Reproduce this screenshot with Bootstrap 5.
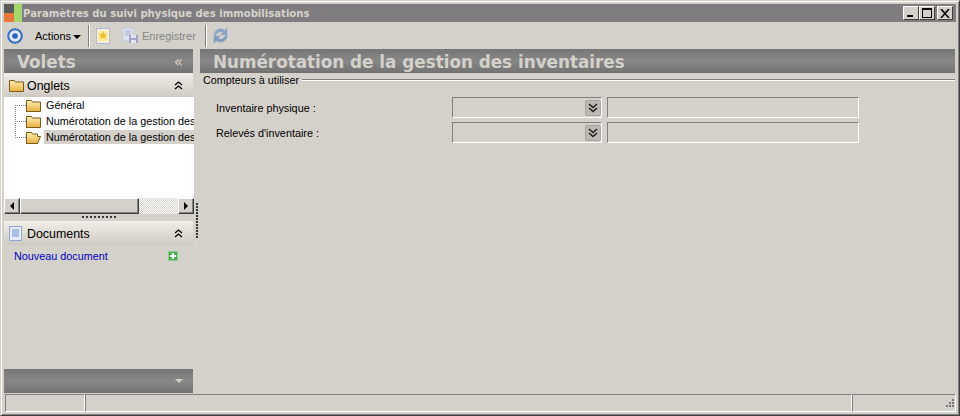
<!DOCTYPE html>
<html lang="fr">

<head>
    <meta charset="UTF-8">
    <title>Paramètres du suivi physique des immobilisations</title>
    <link href="https://cdn.jsdelivr.net/npm/bootstrap@5.3.0/dist/css/bootstrap.min.css" rel="stylesheet">
    <style>
        html, body { height: 100%; }
        body { background: #d4d1cb; font-family: "Liberation Sans", Arial, sans-serif; font-size: 10.8px; color: #000; overflow: hidden; }
        svg { flex: none; }
        .win-frame { width: 960px; height: 416px; background: #d4d1cb; border-style: solid; border-width: 1px; border-color: #d4d1cb #404040 #404040 #d4d1cb; box-shadow: inset 1px 1px 0 #fff, inset -1px -1px 0 #808080; padding: 3px; }
        .title-bar { height: 18px; background: #7f7d7f; padding-right: 3px; }
        .title-logo { width: 18px; height: 18px; flex: none; margin-right: 1px; background: linear-gradient(#5a5a5a, #5a5a5a) left top / 10px 9px no-repeat, linear-gradient(#e8773a, #e8773a) left bottom / 10px 9px no-repeat, #a6d66e; }
        .title-text { font-family: "DejaVu Sans", sans-serif; font-weight: 700; font-size: 10.1px; color: #d6d3cc; padding-top: 2px; }
        .win-btn { width: 16px; height: 14px; background: #d4d1cb; border: 1px solid; border-color: #fff #404040 #404040 #fff; display: flex; align-items: center; justify-content: center; padding: 0; }
        .close-btn { margin-left: 2px; }
        .tool-bar { height: 27px; padding-left: 3px; font-size: 11px; }
        .tool-sep { width: 2px; height: 22px; border-left: 1px solid #808080; border-right: 1px solid #fff; flex: none; }
        .actions-label { margin-left: 12px; width: 53px; padding-top: 2px; }
        .caret-down { width: 0; height: 0; border: 4px solid transparent; border-top-color: #000; border-bottom: 0; margin-left: 2px; display: inline-block; vertical-align: 1px; }
        .new-icon { margin-left: 6px; }
        .save-icon { margin-left: 12px; }
        .save-label { color: #858585; margin-left: 3px; margin-right: 9px; padding-top: 2px; }
        .sync-icon { margin-left: 5px; }
        .work-area { height: 344px; }
        .side-panel { width: 189px; flex: none; }
        .main-panel { margin-left: 7px; width: 755px; flex: none; }
        .gray-head { height: 24px; background: linear-gradient(#777 0, #878787 50%, #727272 100%); color: #d4d1cb; font-family: "DejaVu Sans", sans-serif; font-weight: 700; font-size: 16.8px; line-height: 26px; }
        .side-head { padding-left: 13px; padding-right: 10px; }
        .side-head .fold-mark { font-size: 15px; font-weight: 400; }
        .main-head { padding-left: 13px; }
        .pane-head { height: 24px; background: linear-gradient(#f1efe9, #cfcbc3); padding-left: 5px; padding-right: 10px; font-size: 12.4px; }
        .pane-head span { padding-top: 2px; }
        .pane-onglets span { margin-left: 3px; }
        .pane-docs span { margin-left: 5px; }
        .tree-box { width: 190px; height: 101px; background: #fff; position: relative; overflow: hidden; }
        .tree-row { height: 16px; white-space: nowrap; padding-left: 22px; }
        .tree-row span { padding: 0 1px; margin-left: 4px; height: 14px; line-height: 14px; }
        .tree-row.is-open span { background: #d4d1cb; flex: 1; margin-left: 3px; padding-left: 2px; }
        .tree-line { position: absolute; left: 11px; top: 8px; width: 11px; height: 33px; border-left: 1px dotted #808080; border-bottom: 1px dotted #808080; }
        .tree-tick { position: absolute; left: 11px; width: 11px; border-top: 1px dotted #808080; }
        .tick-one { top: 8px; }
        .tick-two { top: 24px; }
        .scroll-bar { width: 190px; height: 16px; background: repeating-conic-gradient(#d4d1cb 0 25%, #fff 0 50%) 0 0 / 2px 2px; }
        .scroll-btn, .scroll-thumb { background: #d4d1cb; border: 1px solid; border-color: #fff #404040 #404040 #fff; box-shadow: inset -1px -1px 0 #808080; height: 16px; }
        .scroll-btn { width: 16px; display: flex; align-items: center; justify-content: center; flex: none; }
        .scroll-thumb { width: 119px; flex: none; }
        .arrow-left { border: 4px solid transparent; border-right-color: #000; border-left: 0; }
        .arrow-right { border: 4px solid transparent; border-left-color: #000; border-right: 0; }
        .grip-h { width: 34px; height: 2px; margin: 2px auto 3px 78px; flex: none; background: repeating-linear-gradient(90deg, #333 0 2px, transparent 2px 4px); }
        .grip-v { width: 2px; height: 36px; position: absolute; left: 192px; top: 154px; background: repeating-linear-gradient(#333 0 2px, transparent 2px 3px); }
        .doc-link { color: #0000c0; text-decoration: none; padding: 0 15px 0 10px; height: 22px; }
        .side-foot { height: 24px; background: linear-gradient(#777, #888 50%, #727272); padding-right: 10px; margin-top: auto; }
        .foot-arrow { border: 4px solid transparent; border-top-color: #d4d1cb; border-bottom: 0; }
        .group-title { height: 14px; line-height: 13px; padding-left: 3px; margin-bottom: 10px; }
        .group-rule { flex: 1; height: 2px; border-top: 1px solid #808080; border-bottom: 1px solid #fff; margin-left: 3px; }
        .field-row { margin-left: 16px; height: 21px; margin-bottom: 4px; }
        .field-label { width: 236px; flex: none; padding-top: 2px; }
        .sunken { height: 21px; background: #d4d1cb; border: 1px solid; border-color: #808080 #fff #fff #808080; }
        .sel-box { width: 150px; }
        .input-box { width: 252px; margin-left: 5px; }
        .sel-btn { width: 16px; height: 16px; background: #bdb9b2; border: 1px solid #a9a59e; border-radius: 2px; display: flex; align-items: center; justify-content: center; }
        .status-bar { height: 18px; margin-top: 1px; }
        .status-cell { height: 18px; border: 1px solid; border-color: #808080 #fff #fff #808080; }
        .cell-a { width: 80px; margin-left: 1px; }
        .cell-b { width: 767px; }
        .cell-c { flex: 1; position: relative; }
        .size-grip { position: absolute; right: 0; bottom: 0; }
    </style>
</head>

<body>
    <svg width="0" height="0" class="position-absolute">
        <defs>
            <linearGradient id="folderFill" x1="0" y1="0" x2="0" y2="1">
                <stop offset="0" stop-color="#fdeeb0"/>
                <stop offset="1" stop-color="#e8b13f"/>
            </linearGradient>
        </defs>
    </svg>
    <div class="win-frame">
        <!-- Title bar -->
        <div class="title-bar d-flex align-items-center">
            <div class="title-logo"></div>
            <div class="title-text flex-grow-1">Paramètres du suivi physique des immobilisations</div>
            <button class="win-btn"><svg width="10" height="10"><rect x="1" y="7" width="6" height="2" fill="#000"/></svg></button>
            <button class="win-btn"><svg width="12" height="10"><rect x="1.5" y=".5" width="9" height="9" fill="none" stroke="#000"/><rect x="1" y="0" width="10" height="2" fill="#000"/></svg></button>
            <button class="win-btn close-btn"><svg width="10" height="9"><path d="M1 0l8 9M9 0L1 9" stroke="#000" stroke-width="1.6"/></svg></button>
        </div>

        <!-- Toolbar -->
        <div class="tool-bar d-flex align-items-center">
            <svg width="16" height="16" viewBox="0 0 16 16"><circle cx="8" cy="8" r="6.800" fill="#dfe6f5" stroke="#3a6ec4" stroke-width="2"/><circle cx="8" cy="8" r="2.800" fill="#2b5fc0"/></svg>
            <div class="actions-label">Actions<i class="caret-down"></i></div>
            <div class="tool-sep"></div>
            <svg class="new-icon" width="14" height="16" viewBox="0 0 14 16"><rect x=".5" y=".5" width="13" height="15" fill="#f6f1d8" stroke="#aebbd6"/><rect x="2" y="3" width="10" height="10" fill="#fbe9a0"/><path d="M7 3.500l1.200 2.600 2.800.3-2 1.900.6 2.800L7 9.700l-2.600 1.400.6-2.800-2-1.900 2.800-.3z" fill="#efbd2a"/></svg>
            <svg class="save-icon" width="17" height="17" viewBox="0 0 17 17"><rect x="1" y="1" width="10" height="13" fill="#dfe3ee" stroke="#c5cbdc"/><path d="M3 4h6M3 6h6M3 8h6" stroke="#a8b0c8"/><rect x="7" y="8" width="9" height="8" fill="#a5a3c8"/><rect x="9" y="8" width="5" height="3" fill="#e4e4f0"/><rect x="9" y="13" width="5" height="3" fill="#e4e4f0"/></svg>
            <div class="save-label">Enregistrer</div>
            <div class="tool-sep"></div>
            <svg class="sync-icon" width="17" height="19" viewBox="0 0 19 20"><path d="M2 10c0-6 7-10 12-6l3-3v8.500h-7.500l2.500-2.500c-3-2-7-.5-7.500 3z" fill="#8aa3c8" stroke="#a9b6c8" stroke-width=".5"/><path d="M17 10c0 6-7 10-12 6l-3 3v-8.500h7.500l-2.500 2.500c3 2 7 .5 7.500-3z" fill="#7f99c0" stroke="#a9b6c8" stroke-width=".5"/></svg>
        </div>

        <div class="work-area d-flex position-relative">
            <!-- Left pane -->
            <div class="side-panel d-flex flex-column">
                <div class="gray-head side-head d-flex justify-content-between">
                    <span>Volets</span><span class="fold-mark">«</span>
                </div>
                <div class="pane-head pane-onglets d-flex align-items-center">
                    <svg width="15" height="13" viewBox="0 0 15 13"><path d="M.5 1.500h5l1 1.500h8v9.500H.5z" fill="url(#folderFill)" stroke="#7c5a1c"/></svg>
                    <span class="flex-grow-1">Onglets</span>
                    <svg width="9" height="9" viewBox="0 0 9 9"><path d="M1 4l3.500-3L8 4M1 8l3.500-3L8 8" fill="none" stroke="#000" stroke-width="1.300"/></svg>
                </div>
                <div class="tree-box flex-shrink-0">
                    <div class="tree-line"></div>
                    <div class="tree-tick tick-one"></div>
                    <div class="tree-tick tick-two"></div>
                    <div class="tree-row d-flex align-items-center">
                        <svg width="15" height="13" viewBox="0 0 15 13"><path d="M.5 1.500h5l1 1.500h8v9.500H.5z" fill="url(#folderFill)" stroke="#7c5a1c"/></svg>
                        <span>Général</span>
                    </div>
                    <div class="tree-row d-flex align-items-center">
                        <svg width="15" height="13" viewBox="0 0 15 13"><path d="M.5 1.500h5l1 1.500h8v9.500H.5z" fill="url(#folderFill)" stroke="#7c5a1c"/></svg>
                        <span>Numérotation de la gestion des</span>
                    </div>
                    <div class="tree-row is-open d-flex align-items-center">
                        <svg width="15" height="13" viewBox="0 0 15 13"><path d="M.5 12.500v-11h5l1 1.500h5v2.500h3L11.500 12.500z" fill="url(#folderFill)" stroke="#7c5a1c"/></svg>
                        <span>Numérotation de la gestion des</span>
                    </div>
                </div>
                <div class="scroll-bar d-flex flex-shrink-0">
                    <div class="scroll-btn"><i class="arrow-left"></i></div>
                    <div class="scroll-thumb"></div>
                    <div class="scroll-btn ms-auto"><i class="arrow-right"></i></div>
                </div>
                <div class="grip-h"></div>
                <div class="pane-head pane-docs d-flex align-items-center">
                    <svg width="13" height="15" viewBox="0 0 13 15"><rect x=".5" y=".5" width="12" height="14" fill="#e6ecfa" stroke="#8fa6d8"/><path d="M3 4h7M3 6h7M3 8h7M3 10h7" stroke="#6f8fd0"/></svg>
                    <span class="flex-grow-1">Documents</span>
                    <svg width="9" height="9" viewBox="0 0 9 9"><path d="M1 4l3.500-3L8 4M1 8l3.500-3L8 8" fill="none" stroke="#000" stroke-width="1.300"/></svg>
                </div>
                <a class="doc-link d-flex align-items-center justify-content-between" href="#">
                    <span>Nouveau document</span>
                    <svg width="10" height="10" viewBox="0 0 10 10"><rect x=".5" y=".5" width="9" height="9" fill="#4caf50" stroke="#8fc98f"/><path d="M5 2v6M2 5h6" stroke="#fff" stroke-width="2"/></svg>
                </a>
                <div class="side-foot d-flex align-items-center justify-content-end"><i class="foot-arrow"></i></div>
            </div>
            <div class="grip-v"></div>

            <!-- Right pane -->
            <div class="main-panel">
                <div class="gray-head main-head">Numérotation de la gestion des inventaires</div>
                <div class="group-title d-flex align-items-center"><span>Compteurs à utiliser</span><div class="group-rule"></div></div>
                <div class="field-row d-flex align-items-center">
                    <div class="field-label">Inventaire physique :</div>
                    <div class="sunken sel-box d-flex align-items-center justify-content-end">
                        <div class="sel-btn"><svg width="10" height="10" viewBox="0 0 10 10"><path d="M1 1l4 3.500L9 1M1 5l4 3.500L9 5" fill="none" stroke="#222" stroke-width="1.600"/></svg></div>
                    </div>
                    <div class="sunken input-box"></div>
                </div>
                <div class="field-row d-flex align-items-center">
                    <div class="field-label">Relevés d'inventaire :</div>
                    <div class="sunken sel-box d-flex align-items-center justify-content-end">
                        <div class="sel-btn"><svg width="10" height="10" viewBox="0 0 10 10"><path d="M1 1l4 3.500L9 1M1 5l4 3.500L9 5" fill="none" stroke="#222" stroke-width="1.600"/></svg></div>
                    </div>
                    <div class="sunken input-box"></div>
                </div>
            </div>
        </div>

        <!-- Status bar -->
        <div class="status-bar d-flex">
            <div class="status-cell cell-a"></div>
            <div class="status-cell cell-b"></div>
            <div class="status-cell cell-c">
                <svg class="size-grip" width="14" height="14" viewBox="0 0 14 14" fill="#777"><rect x="11" y="2" width="2" height="2"/><rect x="8" y="5" width="2" height="2"/><rect x="11" y="5" width="2" height="2"/><rect x="5" y="8" width="2" height="2"/><rect x="8" y="8" width="2" height="2"/><rect x="11" y="8" width="2" height="2"/></svg>
            </div>
        </div>
    </div>

    <script src="https://cdn.jsdelivr.net/npm/bootstrap@5.3.0/dist/js/bootstrap.bundle.min.js"></script>
</body>

</html>
